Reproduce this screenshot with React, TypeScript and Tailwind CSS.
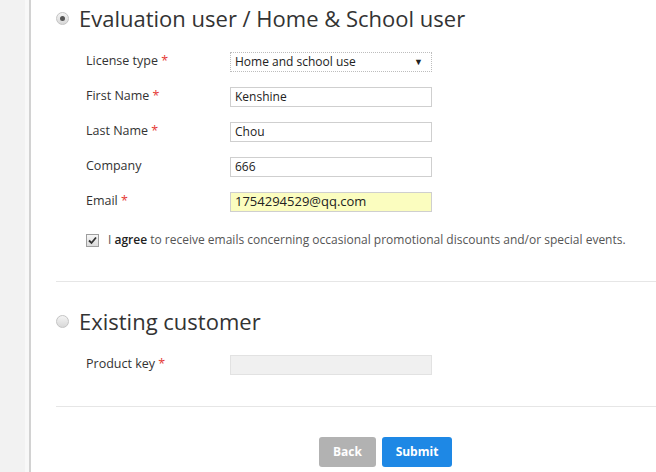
import React from "react";

const Radio = ({ checked }: { checked?: boolean }) => (
  <span className="w-[13px] h-[13px] rounded-full border border-[#c4c4c4] bg-gradient-to-b from-[#f4f4f4] to-[#d8d8d8] flex items-center justify-center shrink-0">
    {checked && <span className="w-[5px] h-[5px] rounded-full bg-[#555]" />}
  </span>
);

const Req = () => <span className="text-[#e53935]"> *</span>;

const Row = ({ label, required, children }: { label: string; required?: boolean; children: React.ReactNode }) => (
  <div className="h-[35px] flex items-center">
    <div className="w-[174px] pl-[30px] text-[12.5px] text-[#333] whitespace-pre">
      {label}
      {required && <Req />}
    </div>
    {children}
  </div>
);

const Field = ({ value, className = "" }: { value?: string; className?: string }) => (
  <div className={`w-[202px] h-[20px] border border-[#cfcfcf] flex items-center px-[4px] text-[12px] text-[#222] ${className}`}>
    {value}
  </div>
);

export default function App() {
  return (
    <div className="w-[656px] h-[472px] overflow-hidden flex bg-white" style={{ fontFamily: '"Open Sans", "Liberation Sans", sans-serif' }}>
      <div className="w-[25px] bg-[#f2f2f2] shrink-0" />
      <div className="w-[4px] bg-[#f8f8f8] shrink-0" />
      <div className="w-[2px] bg-[#d2d2d2] shrink-0" />

      <main className="flex-1 pl-[25px]">
        {/* Evaluation */}
        <div className="h-[36px] flex items-center gap-[10px]">
          <Radio checked />
          <h1 className="text-[22px] text-[#333] leading-none">Evaluation user / Home &amp; School user</h1>
        </div>

        <div className="mt-2">
          <Row label="License type" required>
            <div className="w-[202px] h-[20px] border border-dotted border-[#bdbdbd] flex items-center justify-between pl-[4px] pr-[8px] text-[12px] text-[#222]">
              <span>Home and school use</span>
              <span className="text-[9px] text-[#222]">▼</span>
            </div>
          </Row>
          <Row label="First Name" required>
            <Field value="Kenshine" />
          </Row>
          <Row label="Last Name" required>
            <Field value="Chou" />
          </Row>
          <Row label="Company">
            <Field value="666" />
          </Row>
          <Row label="Email" required>
            <Field value="1754294529@qq.com" className="bg-[#fbfdbf] text-[13px]" />
          </Row>
        </div>

        <div className="mt-[11px] h-[20px] flex items-center pl-[30px] gap-[9px]">
          <span className="w-[13px] h-[13px] border border-[#9e9e9e] bg-gradient-to-b from-[#f6f6f6] to-[#dcdcdc] flex items-center justify-center shrink-0">
            <svg width="9" height="9" viewBox="0 0 9 9">
              <path d="M1 4.5 L3.5 7 L8 1.5" fill="none" stroke="#333" strokeWidth="1.8" />
            </svg>
          </span>
          <p className="text-[12px] text-[#555]">
            I <span className="font-semibold text-[#222]">agree</span> to receive emails concerning occasional promotional discounts and/or special events.
          </p>
        </div>

        <div className="mt-[31px] border-t border-[#e6e6e6]" />

        {/* Existing customer */}
        <div className="mt-[21px] h-[36px] flex items-center gap-[10px]">
          <Radio />
          <h1 className="text-[22px] text-[#333] leading-none">Existing customer</h1>
        </div>

        <div className="mt-2">
          <Row label="Product key" required>
            <Field className="bg-[#f0f0f0] border-[#e2e2e2]" />
          </Row>
        </div>

        <div className="mt-[24px] border-t border-[#e6e6e6]" />

        <div className="mt-[30px] flex gap-[6px] pl-[263px]">
          <button className="w-[57px] h-[30px] rounded-[3px] bg-[#b2b2b2] text-white text-[12px] font-bold">Back</button>
          <button className="w-[70px] h-[30px] rounded-[3px] bg-[#1e88e5] text-white text-[12px] font-bold">Submit</button>
        </div>
      </main>
    </div>
  );
}
